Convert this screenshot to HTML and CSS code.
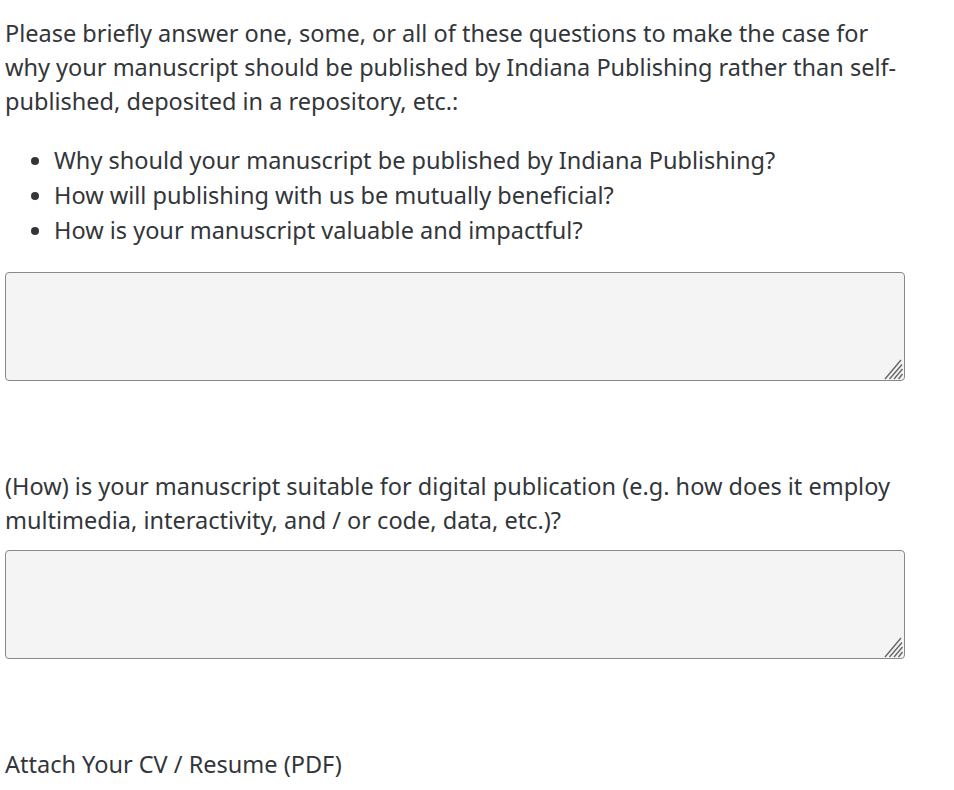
FILE: index.html
```html
<!DOCTYPE html>
<html>
<head>
<meta charset="utf-8">
<link rel="stylesheet" href="styles.css">
</head>
<body>
<div class="form">
  <div class="question">
    <p class="label">Please briefly answer one, some, or all of these questions to make the case for why your manuscript should be published by Indiana Publishing rather than self-published, deposited in a repository, etc.:</p>
    <ul class="list">
      <li>Why should your manuscript be published by Indiana Publishing?</li>
      <li>How will publishing with us be mutually beneficial?</li>
      <li>How is your manuscript valuable and impactful?</li>
    </ul>
    <div class="field-wrap">
      <textarea class="field"></textarea>
      <svg class="grip" width="22" height="22" viewBox="0 0 22 22"><g stroke="#666" stroke-width="1.4" fill="none"><line x1="3" y1="21" x2="19" y2="2"/><line x1="7.5" y1="21" x2="20" y2="6.5"/><line x1="12" y1="21" x2="20.5" y2="11"/><line x1="16.5" y1="21" x2="20.5" y2="16"/></g></svg>
    </div>
  </div>
  <div class="question q2">
    <p class="label">(How) is your manuscript suitable for digital publication (e.g. how does it employ multimedia, interactivity, and / or code, data, etc.)?</p>
    <div class="field-wrap tight">
      <textarea class="field"></textarea>
      <svg class="grip" width="22" height="22" viewBox="0 0 22 22"><g stroke="#666" stroke-width="1.4" fill="none"><line x1="3" y1="21" x2="19" y2="2"/><line x1="7.5" y1="21" x2="20" y2="6.5"/><line x1="12" y1="21" x2="20.5" y2="11"/><line x1="16.5" y1="21" x2="20.5" y2="16"/></g></svg>
    </div>
  </div>
  <div class="question q3">
    <p class="label">Attach Your CV / Resume (PDF)</p>
  </div>
</div>
</body>
</html>
```
FILE: styles.css
```css
html, body {
  margin: 0;
  padding: 0;
  background: #ffffff;
}
body {
  font-family: "Noto Sans", "Open Sans", sans-serif;
  color: #32363a;
  font-size: 23.5px;
}
.form {
  padding: 16px 5px 0 5px;
  width: 900px;
}
.label {
  margin: 0;
  line-height: 34px;
}
.list {
  margin: 25px 0 0 0;
  padding-left: 49px;
  line-height: 35px;
}
.field-wrap {
  position: relative;
  width: 900px;
  height: 109px;
  margin-top: 24px;
}
.field-wrap.tight {
  margin-top: 13px;
}
.field {
  display: block;
  box-sizing: border-box;
  width: 100%;
  height: 100%;
  margin: 0;
  background: #f4f4f4;
  border: 1px solid #898989;
  border-radius: 4px;
  resize: none;
  font: inherit;
}
.grip {
  position: absolute;
  right: 1px;
  bottom: 1px;
}
.q2 {
  margin-top: 88px;
}
.q3 {
  margin-top: 88px;
}
```
